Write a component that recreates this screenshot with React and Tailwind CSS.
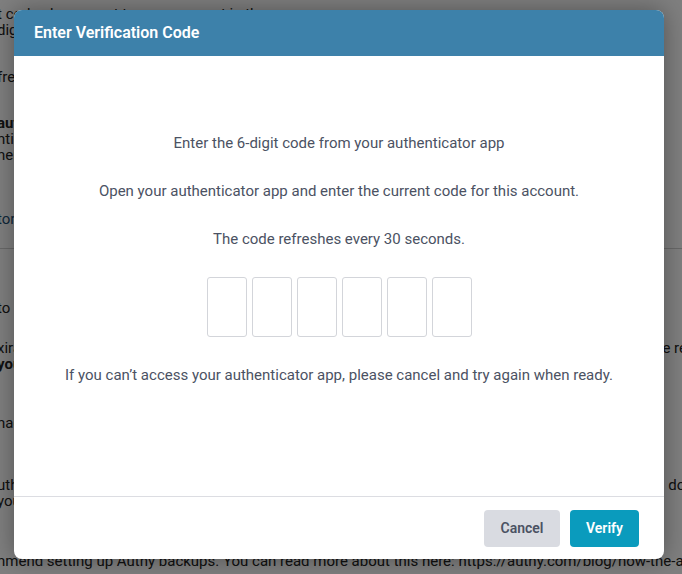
import React from "react";

const CODE_LENGTH = 6;

const BackgroundPage = () => (
  <div className="-ml-[3px] w-[760px] text-[15px] leading-[16px] text-[#222]">
    <div className="pt-[6px]">
      <p className="whitespace-nowrap">t code shown next to your account in the app</p>
      <p className="whitespace-nowrap">digit verification code</p>
      <p className="mt-[31px] whitespace-nowrap">fresh code is generated every 30 seconds</p>
      <p className="mt-[30px] whitespace-nowrap font-bold">authenticator app</p>
      <p className="whitespace-nowrap">ntication method for this account</p>
      <p className="whitespace-nowrap">nergency access</p>
      <p className="mt-[48px] whitespace-nowrap text-[#1d4f73]">tors and recovery options</p>
    </div>
    <div className="mt-[21px] border-t border-[#d0d0d0] pt-[51px]">
      <p className="whitespace-nowrap">to keep your account secure</p>
      <p className="mt-[24px] flex w-[690px] justify-between whitespace-nowrap">
        <span>xiration of your codes</span>
        <span>e re</span>
      </p>
      <p className="whitespace-nowrap font-bold">you</p>
      <p className="mt-[43px] whitespace-nowrap">nage devices</p>
      <p className="mt-[46px] flex w-[697px] justify-between whitespace-nowrap">
        <span>uthenticator backups</span>
        <span>do t</span>
      </p>
      <p className="whitespace-nowrap">your phone</p>
      <p className="mt-[44px] whitespace-nowrap">
        nmend setting up Authy backups. You can read more about this here:{"  "}
        https://authy.com/blog/how-the-authy-two-factor-backups-work/
      </p>
    </div>
  </div>
);

const CodeInputs = () => (
  <div className="flex gap-[5px]">
    {Array.from({ length: CODE_LENGTH }).map((_, i) => (
      <input
        key={i}
        type="text"
        maxLength={1}
        inputMode="numeric"
        aria-label={`Digit ${i + 1}`}
        className="h-[60px] w-10 rounded-[3px] border border-[#d3d5da] bg-white text-center text-xl text-[#374151] outline-none"
      />
    ))}
  </div>
);

export default function App() {
  return (
    <div
      className="relative h-[574px] w-[682px] overflow-hidden bg-white"
      style={{ fontFamily: "Roboto, 'Noto Sans', sans-serif" }}
    >
      <BackgroundPage />

      {/* Modal overlay */}
      <div className="absolute inset-0 bg-black/50">
        <div className="ml-[14px] mt-[10px] flex h-[549px] w-[650px] flex-col overflow-hidden rounded-lg bg-white shadow-[0_0_24px_rgba(0,0,0,0.35)]">
          <div className="flex h-[46px] items-center bg-[#3d81aa] px-5">
            <h2 className="text-base font-semibold text-white">
              Enter Verification Code
            </h2>
          </div>

          <div className="flex h-[440px] flex-col items-center gap-7 pt-[77px] text-[15px] leading-5 text-[#4b5263]">
            <p>Enter the 6-digit code from your authenticator app</p>
            <p>Open your authenticator app and enter the current code for this account.</p>
            <p>The code refreshes every 30 seconds.</p>
            <CodeInputs />
            <p>
              If you can’t access your authenticator app, please cancel and try
              again when ready.
            </p>
          </div>

          <div className="flex flex-1 items-center justify-end gap-[10px] border-t border-[#dcdde2] pr-[25px]">
            <button className="h-[37px] w-[76px] rounded bg-[#d9dbe1] text-sm font-semibold text-[#4b5263]">
              Cancel
            </button>
            <button className="h-[37px] w-[69px] rounded bg-[#0a9bbd] text-sm font-semibold text-white">
              Verify
            </button>
          </div>
        </div>
      </div>
    </div>
  );
}
